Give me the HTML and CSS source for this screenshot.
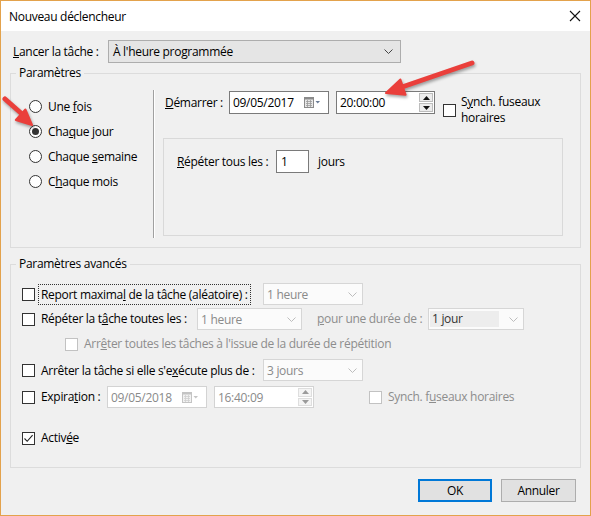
FILE: index.html
```html
<!DOCTYPE html>
<html lang="fr">
<head>
<meta charset="utf-8">
<title>Nouveau déclencheur</title>
<link rel="stylesheet" href="styles.css">
</head>
<body>
<div class="win">
  <div class="titlebar">
    <span class="title">Nouveau déclencheur</span>
    <svg class="close" width="12" height="12" viewBox="0 0 12 12"><path d="M1 1 L11 11 M11 1 L1 11" stroke="#111" stroke-width="1.1" fill="none"/></svg>
  </div>
  <div class="content">
    <div class="launch">
      <span class="lbl launch-lbl"><u>L</u>ancer la tâche :</span>
      <div class="combo combo-main">
        <span class="ctext">À l'heure programmée</span>
        <svg class="chev" width="9" height="5" viewBox="0 0 9 5"><path d="M0.5 0.5 L4.5 4.5 L8.5 0.5" stroke="#444" fill="none"/></svg>
      </div>
    </div>

    <fieldset class="grp grp1">
      <legend>Paramètres</legend>
      <div class="freq">
        <div class="radio-row"><span class="radio"></span><span class="lbl">Une <u>f</u>ois</span></div>
        <div class="radio-row"><span class="radio checked"></span><span class="lbl">Cha<u>q</u>ue jour</span></div>
        <div class="radio-row"><span class="radio"></span><span class="lbl">Chaque <u>s</u>emaine</span></div>
        <div class="radio-row"><span class="radio"></span><span class="lbl">C<u>h</u>aque mois</span></div>
      </div>
      <div class="sep"></div>
      <div class="sched">
        <div class="start-row">
          <span class="lbl start-lbl"><u>D</u>émarrer :</span>
          <div class="field date">
            <span class="ftext">09/05/2017</span>
            <svg class="cal" width="17" height="11" viewBox="0 0 17 11"><rect x="0.5" y="0.5" width="9" height="10" fill="#e8e8e8" stroke="#8a8a8a"/><rect x="0.5" y="0.5" width="9" height="2" fill="#8a8a8a"/><path d="M2 4.5h6M2 6.5h6M2 8.5h6M3.5 3v7M6.5 3v7" stroke="#9a9a9a" stroke-width="0.8"/><path d="M11.5 4 L16 4 L13.75 6.5 Z" fill="#6a7c96"/></svg>
          </div>
          <div class="field time">
            <span class="ftext">20:00:00</span>
            <div class="spin">
              <span class="spin-btn"><svg width="7" height="4" viewBox="0 0 7 4"><path d="M0 4 L3.5 0 L7 4 Z" fill="#111"/></svg></span>
              <span class="spin-btn"><svg width="7" height="4" viewBox="0 0 7 4"><path d="M0 0 L3.5 4 L7 0 Z" fill="#111"/></svg></span>
            </div>
          </div>
          <span class="check"></span>
          <span class="synch"><span class="sl">S<u>y</u>nch. fuseaux</span><span class="sl">horaires</span></span>
        </div>
        <div class="repeat-box">
          <span class="lbl"><u>R</u>épéter tous les :</span>
          <div class="field num"><span class="ftext">1</span></div>
          <span class="lbl">jours</span>
        </div>
      </div>
    </fieldset>

    <fieldset class="grp grp2">
      <legend>Paramètres avancés</legend>
      <div class="arow r1">
        <span class="check"></span>
        <span class="cell"><span class="lbl focus">Report maxima<u>l</u> de la tâche (aléatoire) :</span></span>
        <div class="combo dis w100"><span class="ctext">1 heure</span><svg class="chev" width="9" height="5" viewBox="0 0 9 5"><path d="M0.5 0.5 L4.5 4.5 L8.5 0.5" stroke="#bdbdbd" fill="none"/></svg></div>
      </div>
      <div class="arow r2">
        <span class="check"></span>
        <span class="lbl rep-lbl">Répéter la t<u>â</u>che toutes les :</span>
        <div class="combo dis w105"><span class="ctext">1 heure</span><svg class="chev" width="9" height="5" viewBox="0 0 9 5"><path d="M0.5 0.5 L4.5 4.5 L8.5 0.5" stroke="#bdbdbd" fill="none"/></svg></div>
        <span class="lbl gray dur-lbl"><u>p</u>our une durée de :</span>
        <div class="combo dis w96 sel"><span class="ctext">1 jour</span><svg class="chev" width="9" height="5" viewBox="0 0 9 5"><path d="M0.5 0.5 L4.5 4.5 L8.5 0.5" stroke="#bdbdbd" fill="none"/></svg></div>
      </div>
      <div class="arow r3">
        <span class="check dis"></span>
        <span class="lbl gray">Arr<u>ê</u>ter toutes les tâches à l'issue de la durée de répétition</span>
      </div>
      <div class="arow r4">
        <span class="check"></span>
        <span class="cell"><span class="lbl">Arrêter la tâche si elle s'e<u>x</u>écute plus de :</span></span>
        <div class="combo dis w100"><span class="ctext">3 jours</span><svg class="chev" width="9" height="5" viewBox="0 0 9 5"><path d="M0.5 0.5 L4.5 4.5 L8.5 0.5" stroke="#bdbdbd" fill="none"/></svg></div>
      </div>
      <div class="arow r5">
        <span class="check"></span>
        <span class="lbl exp-lbl">Expira<u>t</u>ion :</span>
        <div class="field date dis">
          <span class="ftext">09/05/2018</span>
          <svg class="cal" width="17" height="11" viewBox="0 0 17 11"><rect x="0.5" y="0.5" width="9" height="10" fill="#f2f2f2" stroke="#c4c4c4"/><rect x="0.5" y="0.5" width="9" height="2" fill="#c4c4c4"/><path d="M2 4.5h6M2 6.5h6M2 8.5h6M3.5 3v7M6.5 3v7" stroke="#cfcfcf" stroke-width="0.8"/><path d="M11.5 4 L16 4 L13.75 6.5 Z" fill="#c4c4c4"/></svg>
        </div>
        <div class="field time dis">
          <span class="ftext">16:40:09</span>
          <div class="spin">
            <span class="spin-btn"><svg width="7" height="4" viewBox="0 0 7 4"><path d="M0 4 L3.5 0 L7 4 Z" fill="#9a9a9a"/></svg></span>
            <span class="spin-btn"><svg width="7" height="4" viewBox="0 0 7 4"><path d="M0 0 L3.5 4 L7 0 Z" fill="#9a9a9a"/></svg></span>
          </div>
        </div>
        <span class="check dis synch2"></span>
        <span class="lbl gray">Synch. f<u>u</u>seaux horaires</span>
      </div>
      <div class="arow r6">
        <span class="check on"><svg width="11" height="11" viewBox="0 0 11 11"><path d="M1.5 5.5 L4.2 8.3 L9.6 2.2" stroke="#222" stroke-width="1.1" fill="none"/></svg></span>
        <span class="lbl">Activ<u>é</u>e</span>
      </div>
    </fieldset>

    <div class="buttons">
      <span class="btn default">OK</span>
      <span class="btn">Annuler</span>
    </div>
  </div>

  <svg class="arrows" width="591" height="516" viewBox="0 0 591 516">
    <g fill="#ea3f3b" stroke="#ea3f3b" stroke-linejoin="round">
      <line x1="472" y1="63" x2="402" y2="87" stroke-width="5" stroke-linecap="round"/>
      <path d="M386 93 L405.6 94.7 L400.4 79.5 Z" stroke-width="2"/>
      <line x1="5" y1="99" x2="22" y2="114" stroke-width="5" stroke-linecap="round"/>
      <path d="M32 125 L15.8 120 L25.4 109.5 Z" stroke-width="2"/>
    </g>
  </svg>
</div>
</body>
</html>
```

FILE: styles.css
```css
* { box-sizing: border-box; }
html, body { margin: 0; padding: 0; background: #f0f0f0; }
body {
  font-family: "Segoe UI", "Open Sans", "Noto Sans", sans-serif;
  font-size: 12px;
  letter-spacing: -0.3px;
  color: #000;
}
u { text-decoration: underline; text-underline-offset: 1px; }

.win {
  position: relative;
  width: 591px;
  height: 516px;
  border: 1px solid #e3a24c;
  background: #f0f0f0;
  overflow: hidden;
}

.titlebar {
  height: 30px;
  background: #fff;
  display: flex;
  align-items: center;
  justify-content: space-between;
  padding: 0 9px 0 8px;
}
.title { font-size: 12px; color: #000; }

.content { padding: 0 9px; }

.lbl { white-space: nowrap; line-height: 16px; }
.gray { color: #8d8d8d; }

.launch {
  display: flex;
  align-items: center;
  margin-top: 9px;
  height: 23px;
}
.launch-lbl { padding-left: 3px; width: 98px; }

.combo {
  display: flex;
  align-items: center;
  justify-content: space-between;
  height: 23px;
  border: 1px solid #adadad;
  background: #e5e5e5;
  padding: 0 7px 0 4px;
}
.combo-main { width: 293px; }
.combo.dis {
  background: #fbfbfb;
  border-color: #d6d6d6;
  color: #8a8a8a;
  height: 22px;
  padding: 0 5px 0 3px;
}
.combo.sel { padding: 2px 5px 2px 1px; align-items: stretch; }
.combo.sel .ctext {
  flex: 1;
  margin-right: 10px;
  background: #ededed;
  color: #333;
  padding-left: 2px;
  line-height: 16px;
}
.combo.sel .chev { align-self: center; }
.w100 { width: 100px; }
.w105 { width: 105px; }
.w96 { width: 96px; }

.grp {
  margin: 0;
  padding: 0;
  border: 1px solid #dcdcdc;
  min-width: 0;
}
.grp legend {
  margin-left: 5px;
  padding: 0 3px;
  line-height: 16px;
}

.grp.grp1 { margin-top: 2px; display: flex; }

.freq {
  width: 142px;
  padding: 13px 0 0 18px;
}
.radio-row {
  height: 25px;
  display: flex;
  align-items: center;
  gap: 6px;
}
.radio {
  width: 13px;
  height: 13px;
  border: 1px solid #333;
  border-radius: 50%;
  background: #fff;
  display: flex;
  align-items: center;
  justify-content: center;
}
.radio.checked::after {
  content: "";
  width: 7px;
  height: 7px;
  border-radius: 50%;
  background: #333;
}

.sep {
  width: 2px;
  margin: 9px 0;
  border-left: 1px solid #a0a0a0;
  border-right: 1px solid #fff;
}

.sched {
  padding: 10px 0 11px 10px;
  flex: 1;
}
.start-row {
  display: flex;
  align-items: center;
  height: 23px;
}
.start-lbl { width: 64px; }

.field {
  height: 23px;
  border: 1px solid #7a7a7a;
  background: #fff;
  display: flex;
  align-items: center;
  justify-content: space-between;
  padding: 0 1px 0 3px;
}
.field.date { width: 100px; padding-right: 7px; }
.field.time { width: 99px; margin-left: 7px; }
.field.dis { border-color: #d3d3d3; color: #8a8a8a; height: 22px; }
.field.num { width: 33px; margin: 0 9px 0 0; padding-left: 4px; }

.spin {
  display: flex;
  flex-direction: column;
  gap: 1px;
  height: 100%;
  padding: 1px 0;
}
.spin-btn {
  width: 14px;
  flex: 1;
  display: flex;
  align-items: center;
  justify-content: center;
  background: #ececec;
  border: 1px solid #bcbcbc;
}
.field.dis .spin-btn { border-color: #dedede; background: #f4f4f4; }

.check {
  width: 13px;
  height: 13px;
  border: 1px solid #333;
  background: #fff;
  flex: none;
  display: flex;
  align-items: center;
  justify-content: center;
}
.check.dis { border-color: #c2c2c2; }
.start-row .check { margin: 13px 5px 0 8px; align-self: flex-start; }
.synch {
  align-self: flex-start;
  margin-top: 3px;
  display: flex;
  flex-direction: column;
  white-space: nowrap;
}
.sl { display: block; height: 16px; line-height: 16px; }

.repeat-box {
  margin: 24px 0 0 -2px;
  width: 400px;
  height: 98px;
  border: 1px solid #d9d9d9;
  display: flex;
  align-items: flex-start;
  padding: 11px 0 0 13px;
}
.repeat-box .lbl { line-height: 23px; }
.repeat-box .lbl:first-child { width: 99px; }

.grp.grp2 { margin-top: 8px; padding: 0 0 17px 0; }
.arow {
  display: flex;
  align-items: center;
  height: 24px;
  padding-left: 11px;
}
.arow .check + .lbl, .arow .check + .cell { margin-left: 6px; }
.r1 { margin-top: 10px; }
.r2 { margin-top: 1px; }
.r3 { margin-top: 1px; padding-left: 54px; }
.r4 { margin-top: 2px; }
.r5 { margin-top: 3px; }
.r6 { margin-top: 17px; }

.cell { width: 222px; }
.focus {
  outline: 1px dotted #333;
  outline-offset: 1px;
  margin-left: -1px;
  padding: 0 1px;
}
.rep-lbl { width: 156px; }
.dur-lbl { margin-left: 15px; width: 111px; }
.exp-lbl { width: 66px; }
.r5 .field.time { margin-left: 7px; width: 100px; }
.synch2 { margin: 0 0 0 55px; }

.buttons {
  display: flex;
  justify-content: flex-end;
  gap: 9px;
  margin-top: 11px;
  padding-right: 5px;
}
.btn {
  width: 75px;
  height: 23px;
  border: 1px solid #adadad;
  background: #e1e1e1;
  display: flex;
  align-items: center;
  justify-content: center;
}
.btn.default { border: 2px solid #0078d7; width: 74px; }

.arrows {
  position: absolute;
  left: -1px;
  top: -1px;
  pointer-events: none;
  filter: drop-shadow(1px 2px 1.5px rgba(0,0,0,0.35));
}
```
